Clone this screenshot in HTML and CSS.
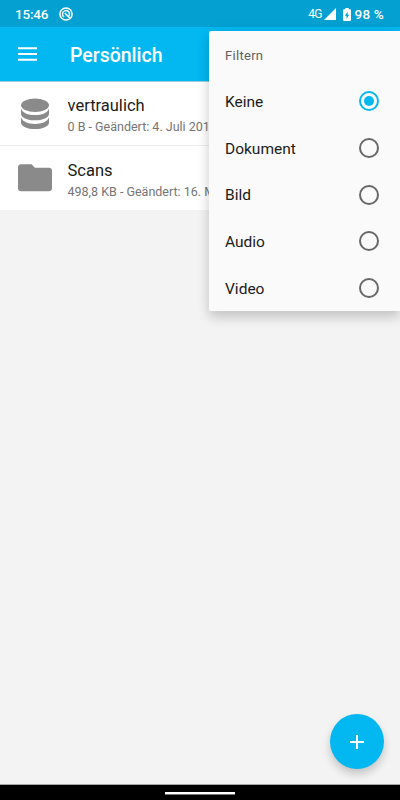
FILE: index.html
```html
<!DOCTYPE html>
<html lang="de">
<head>
<meta charset="utf-8">
<title>Persönlich</title>
<link rel="stylesheet" href="styles.css">
</head>
<body>
<div class="screen">
  <header class="statusbar">
    <span class="clock">15:46</span>
    <svg class="notice" width="14" height="14" viewBox="0 0 14 14" fill="none" stroke="#fff">
      <circle cx="7" cy="7" r="6.1" stroke-width="1.5"/>
      <path d="M9.800 9.100A3.500 3.500 0 1 0 5.200 10" stroke-width="1.400"/>
      <path d="M5.800 6l5.200 5.300" stroke-width="1.600"/>
    </svg>
    <span class="network">4G</span>
    <svg class="signal" width="12" height="12" viewBox="0 0 12 12"><path d="M0 12L12 0v12z" fill="#fff"/></svg>
    <svg class="battery" width="8" height="13" viewBox="0 0 8 13">
      <path d="M2.300 0h3.400v1.300H7a1 1 0 0 1 1 1V12a1 1 0 0 1-1 1H1a1 1 0 0 1-1-1V2.300a1 1 0 0 1 1-1h1.300z" fill="#fff"/>
      <path d="M4.600 3.700L1.800 7.800h1.700v3L6.300 6.700H4.600z" fill="#03a0d1"/>
    </svg>
    <span class="percent">98 %</span>
  </header>
  <div class="toolbar">
    <svg class="burger" width="19" height="14" viewBox="0 0 19 14"><path d="M0 1.200h19M0 7h19M0 12.800h19" stroke="#fff" stroke-width="2"/></svg>
    <h1 class="title">Persönlich</h1>
  </div>
  <main class="files">
    <div class="file">
      <svg class="file-icon" width="36" height="32" viewBox="0 0 36 32" fill="#8a8a8a">
        <ellipse cx="18" cy="7.300" rx="14" ry="6.700"/>
        <path d="M4 10.500c1.500 4.600 7 6.600 14 6.600s12.500-2 14-6.600v5.200c0 4-6.300 6.600-14 6.600S4 19.700 4 15.700z"/>
        <path d="M4 19.300c1.500 4.600 7 6.600 14 6.600s12.500-2 14-6.600v5.200c0 4-6.300 6.600-14 6.600S4 28.500 4 24.500z"/>
      </svg>
      <div class="file-text"><div class="name">vertraulich</div><div class="meta">0 B - Geändert: 4. Juli 201</div></div>
    </div>
    <div class="file">
      <svg class="file-icon" width="36" height="32" viewBox="0 0 36 32" fill="#8a8a8a">
        <path d="M4.300 2.300h10.200l3.400 3.400h13.800a3.300 3.300 0 0 1 3.300 3.300v17a3.300 3.300 0 0 1-3.300 3.300H4.300A3.300 3.300 0 0 1 1 26V5.600a3.300 3.300 0 0 1 3.300-3.300z"/>
      </svg>
      <div class="file-text"><div class="name">Scans</div><div class="meta">498,8 KB - Geändert: 16. M</div></div>
    </div>
  </main>
  <div class="menu">
    <div class="menu-title">Filtern</div>
    <div class="option"><span>Keine</span><i class="radio checked"></i></div>
    <div class="option"><span>Dokument</span><i class="radio"></i></div>
    <div class="option"><span>Bild</span><i class="radio"></i></div>
    <div class="option"><span>Audio</span><i class="radio"></i></div>
    <div class="option"><span>Video</span><i class="radio"></i></div>
  </div>
  <div class="fab"><svg width="14" height="14" viewBox="0 0 14 14"><path d="M7 0v14M0 7h14" stroke="#fff" stroke-width="2"/></svg></div>
  <footer class="navbar"><div class="handle"></div></footer>
</div>
</body>
</html>
```
FILE: styles.css
```css
* { box-sizing: border-box; }
body { margin: 0; font-family: Roboto, sans-serif; }
.screen {
  position: relative;
  display: flex;
  flex-direction: column;
  width: 400px;
  height: 800px;
  overflow: hidden;
  background: #f3f3f3;
}
.statusbar {
  display: flex;
  align-items: center;
  height: 27px;
  padding: 1px 16px 0 15px;
  background: #03a0d1;
  color: #fff;
}
.clock { width: 44px; font-size: 13.5px; font-weight: 500; letter-spacing: -0.2px; }
.network { margin-left: auto; font-size: 12px; letter-spacing: -0.8px; }
.signal { margin-left: 2px; }
.battery { margin: 0 4px 0 7px; }
.percent { font-size: 13.5px; font-weight: 500; letter-spacing: 0.2px; }
.toolbar {
  display: flex;
  align-items: center;
  flex: none;
  height: 54px;
  padding-left: 18px;
  background: #03b8f1;
}
.title { margin: 3px 0 0 33px; color: #fff; font-size: 19.500px; line-height: 24px; font-weight: 500; }
.files { border-top: 1px solid #9bcfe0; }
.file {
  display: flex;
  align-items: center;
  height: 63px;
  padding-left: 17px;
  background: #fff;
  white-space: nowrap;
}
.file + .file { height: 65px; border-top: 1px solid #ededed; }
.file-icon { flex: none; margin-right: 14.500px; }
.file-text { width: 141.500px; padding-top: 5px; }
.file + .file .name { padding-top: 1px; }
.name { color: #1b1b1b; font-size: 16.500px; line-height: 22px; }
.meta { color: #747474; font-size: 12.500px; line-height: 20px; }
.menu {
  position: absolute;
  top: 31px;
  left: 209px;
  width: 191px;
  height: 280px;
  display: grid;
  grid-template-rows: repeat(6, 1fr);
  background: #fafafa;
  border-radius: 2px 0 0 2px;
  box-shadow: 0 7px 12px rgba(0,0,0,.14), 0 2px 14px rgba(0,0,0,.08);
}
.menu-title, .option { display: flex; align-items: center; padding: 2px 21px 0 16px; }
.menu-title { color: #606060; font-size: 13px; letter-spacing: 0.3px; }
.option { justify-content: space-between; color: #1b1b1b; font-size: 15.500px; }
.radio {
  display: grid;
  place-items: center;
  width: 20px;
  height: 20px;
  margin-top: -1px;
  border: 2px solid #686868;
  border-radius: 50%;
}
.checked { border-color: #03b8f1; }
.checked::after { content: ""; width: 10px; height: 10px; border-radius: 50%; background: #03b8f1; }
.fab {
  position: absolute;
  left: 330px;
  top: 714px;
  display: grid;
  place-items: center;
  width: 54px;
  height: 55px;
  border-radius: 50%;
  background: #03b8f1;
  box-shadow: 0 5px 8px rgba(0,0,0,.2);
}
.navbar {
  display: flex;
  justify-content: center;
  height: 16px;
  margin-top: auto;
  padding-top: 7px;
  border-top: 1px solid #a5a7a6;
  background: #000;
}
.handle { width: 70px; height: 2px; background: #fff; box-shadow: 0 1px #777; }
```
